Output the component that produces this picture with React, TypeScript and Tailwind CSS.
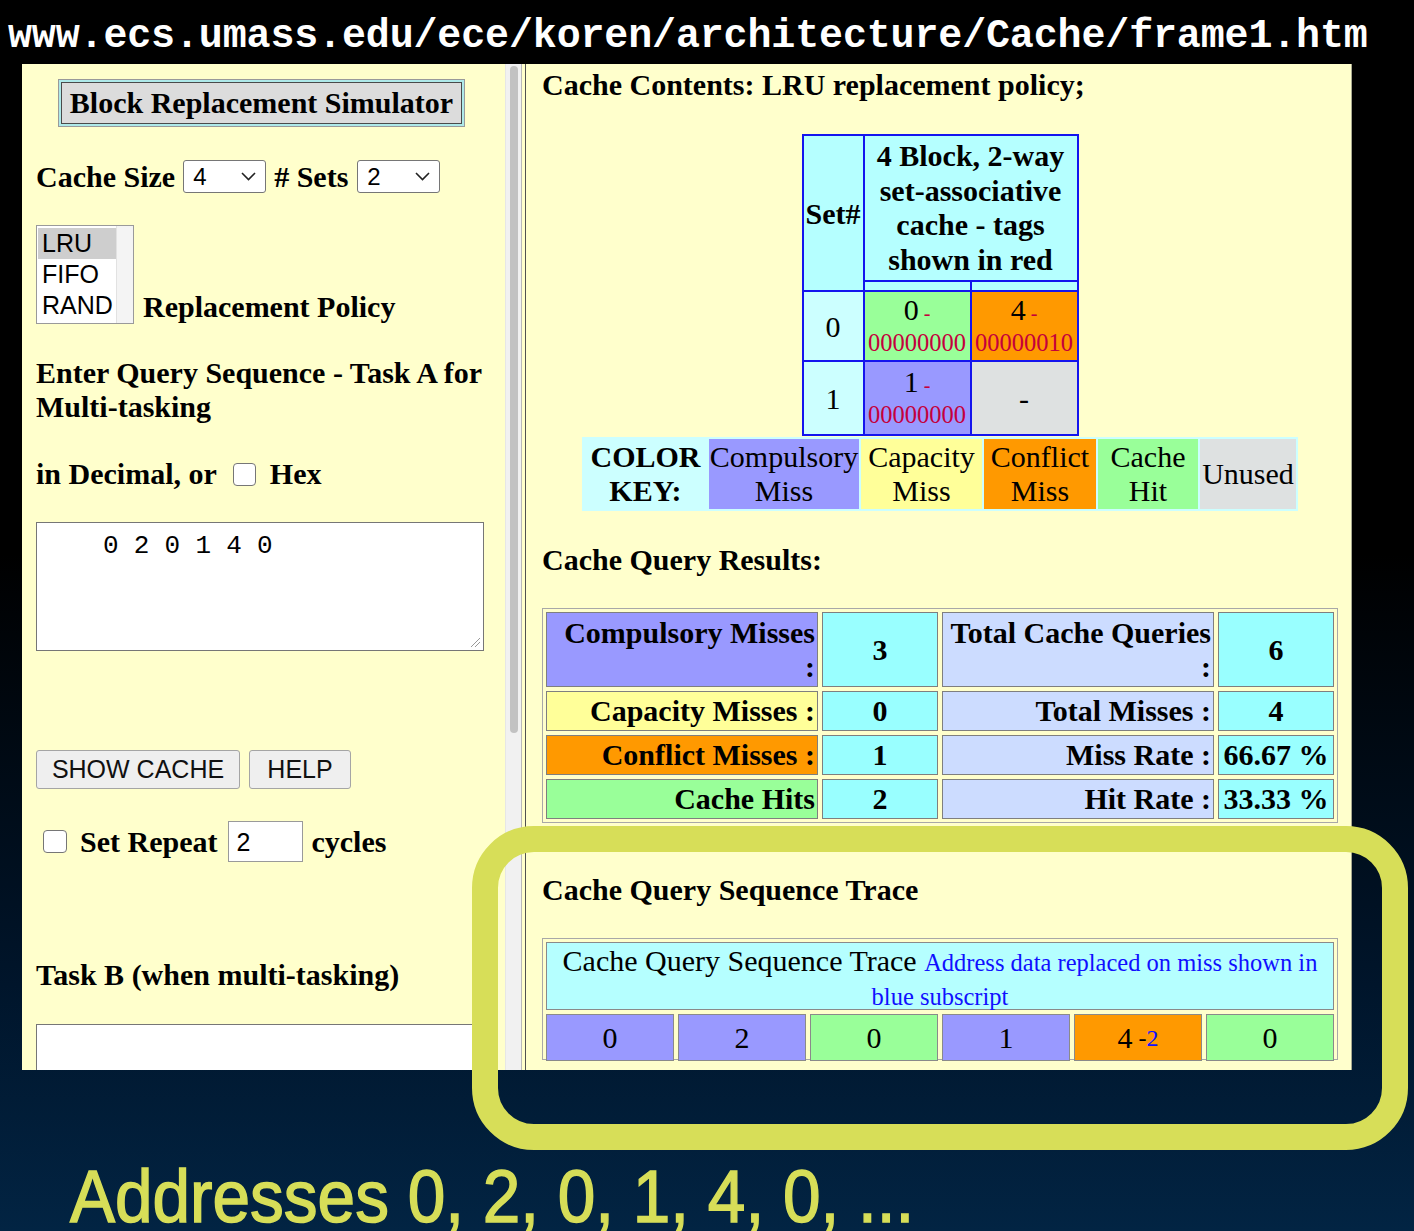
import React from "react";

const sans = "font-['Liberation_Sans',Arial,sans-serif]";

function Select({ value }: { value: string }) {
  return (
    <div
      className={`flex h-[33px] w-[83px] items-center justify-between rounded-[3px] border border-[#767676] bg-white pl-[9px] pr-[9px] text-[24px] font-normal ${sans}`}
    >
      <span>{value}</span>
      <svg width="15" height="9" viewBox="0 0 15 9" fill="none">
        <polyline points="1,1 7.5,7.5 14,1" stroke="#222" strokeWidth="1.6" />
      </svg>
    </div>
  );
}

function Checkbox({ w = 23 }: { w?: number }) {
  return (
    <div
      className={`h-[23px] shrink-0 rounded-[4px] border border-[#767676] bg-white ${
        w === 24 ? "w-[24px]" : "w-[23px]"
      }`}
    />
  );
}

function Label({ bg, children }: { bg: string; children: React.ReactNode }) {
  return (
    <div
      className={`flex flex-col items-end justify-center border border-[#7f7f7f] pr-[2px] text-right text-[30px] font-bold leading-[34px] ${bg}`}
    >
      {children}
    </div>
  );
}

function Value({ children }: { children: React.ReactNode }) {
  return (
    <div className="flex items-center justify-center border border-[#7f7f7f] bg-[#99ffff] text-[30px] font-bold leading-[34px]">
      {children}
    </div>
  );
}

function TraceCell({ bg, children }: { bg: string; children: React.ReactNode }) {
  return (
    <div className={`flex items-center justify-center border border-[#8a8a8a] text-[30px] ${bg}`}>
      {children}
    </div>
  );
}

export default function App() {
  return (
    <div className="relative h-[1231px] w-[1414px] overflow-hidden bg-[linear-gradient(to_bottom,#000_0%,#000_45%,#00152b_80%,#022443_100%)]">
      {/* url line */}
      <div className="h-[64px] whitespace-nowrap pl-[8px] pt-[15px] font-['Liberation_Mono',monospace] text-[40px] font-bold leading-[44px] tracking-[-0.15px] text-white">
        www.ecs.umass.edu/ece/koren/architecture/Cache/frame1.htm
      </div>

      {/* browser page */}
      <div className="ml-[22px] flex h-[1006px] w-[1330px] overflow-hidden font-['Liberation_Serif','Times_New_Roman',serif] text-black">
        {/* left frame */}
        <div className="w-[483px] shrink-0 overflow-hidden bg-[#ffffcc] pl-[14px] pt-[15px]">
          <div className="ml-[22px] h-[48px] w-[407px] border border-[#9a9a9a] bg-[#aee9e9] p-[2px]">
            <div className="flex h-full items-center justify-center border border-[#4a4a4a] bg-[#dcdcdc] text-[30px] font-bold leading-[34px]">
              Block Replacement Simulator
            </div>
          </div>

          <div className="mt-[33px] flex h-[33px] items-center text-[30px] font-bold leading-[34px]">
            <span>Cache Size</span>
            <div className="ml-[8px]">
              <Select value="4" />
            </div>
            <span className="ml-[8px]"># Sets</span>
            <div className="ml-[9px]">
              <Select value="2" />
            </div>
          </div>

          <div className="mt-[32px] flex items-end">
            <div className={`flex h-[99px] w-[98px] border border-[#9a9a9a] bg-white text-[25px] leading-[31px] ${sans}`}>
              <div className="w-[79px] pl-[1px] pt-[2px]">
                <div className="bg-[#cecece] pl-[4px]">LRU</div>
                <div className="pl-[4px]">FIFO</div>
                <div className="pl-[4px]">RAND</div>
              </div>
              <div className="flex-1 border-l border-[#e2e2e2] bg-[#f4f4f4]" />
            </div>
            <span className="ml-[9px] text-[30px] font-bold leading-[34px]">Replacement Policy</span>
          </div>

          <div className="mt-[32px] text-[30px] font-bold leading-[34px]">
            Enter Query Sequence - Task A for
            <br />
            Multi-tasking
          </div>

          <div className="mt-[33px] flex h-[34px] items-center text-[30px] font-bold leading-[34px]">
            <span>in Decimal, or</span>
            <div className="ml-[16px]">
              <Checkbox />
            </div>
            <span className="ml-[14px]">Hex</span>
          </div>

          <div className="relative mt-[31px] h-[129px] w-[448px] border border-[#767676] bg-white pl-[66px] pt-[8px] font-['Liberation_Mono',monospace] text-[26px] leading-[30px] tracking-[-0.2px] whitespace-pre">
            0 2 0 1 4 0
            <svg className="absolute bottom-[2px] right-[2px]" width="11" height="11" viewBox="0 0 11 11">
              <line x1="1" y1="10" x2="10" y2="1" stroke="#999" strokeWidth="1" />
              <line x1="5" y1="10" x2="10" y2="5" stroke="#999" strokeWidth="1" />
            </svg>
          </div>

          <div className={`mt-[99px] flex gap-[9px] text-[25px] text-[#111] ${sans}`}>
            <div className="flex h-[39px] w-[204px] items-center justify-center rounded-[3px] border border-[#a5a5a5] bg-[#efefef]">
              SHOW CACHE
            </div>
            <div className="flex h-[39px] w-[102px] items-center justify-center rounded-[3px] border border-[#a5a5a5] bg-[#efefef]">
              HELP
            </div>
          </div>

          <div className="mt-[32px] flex h-[41px] items-center text-[30px] font-bold leading-[34px]">
            <div className="ml-[7px]">
              <Checkbox w={24} />
            </div>
            <span className="ml-[13px]">Set Repeat</span>
            <div className={`ml-[11px] flex h-[41px] w-[75px] items-center border border-[#9a9a9a] bg-white pl-[7px] text-[25px] font-normal ${sans}`}>
              2
            </div>
            <span className="ml-[8px]">cycles</span>
          </div>

          <div className="mt-[96px] text-[30px] font-bold leading-[34px]">Task B (when multi-tasking)</div>

          <div className="mt-[32px] h-[100px] w-[448px] border border-[#767676] bg-white" />
        </div>

        {/* scrollbar */}
        <div className="w-[16px] shrink-0 border-l border-[#e6e6e6] bg-[#f1f1f1] pt-[2px]">
          <div className="mx-auto h-[667px] w-[8px] rounded-full bg-[#c2c2c2]" />
        </div>
        {/* frame divider */}
        <div className="w-[5px] shrink-0 border-l border-r border-l-[#b8b8b8] border-r-[#505050] bg-[#ffffcc]" />

        {/* right frame */}
        <div className="w-[826px] shrink-0 border-r border-[#a8a890] bg-[#ffffcc] pl-[16px] pr-[13px] pt-[4px]">
          <div className="text-[30px] font-bold leading-[34px]">Cache Contents: LRU replacement policy;</div>

          <div className="mx-auto mt-[32px] grid w-fit grid-cols-[59px_105px_105px] grid-rows-[144px_8px_68px_72px] gap-[2px] bg-[#1414ee] p-[2px] text-center">
            <div className="row-span-2 flex items-center justify-center bg-[#b5ffff] text-[30px] font-bold">Set#</div>
            <div className="col-span-2 flex items-center justify-center bg-[#b5ffff] text-[30px] font-bold leading-[34.5px]">
              <div>
                4 Block, 2-way
                <br />
                set-associative
                <br />
                cache - tags
                <br />
                shown in red
              </div>
            </div>
            <div className="bg-[#b5ffff]" />
            <div className="bg-[#b5ffff]" />

            <div className="flex items-center justify-center bg-[#ccffff] text-[30px]">0</div>
            <div className="flex flex-col items-center justify-center bg-[#99ff99] leading-[30px]">
              <div className="text-[30px]">
                0<span className="text-[20px] text-[#c4003c]"> -</span>
              </div>
              <div className="text-[24.5px] text-[#c4003c]">00000000</div>
            </div>
            <div className="flex flex-col items-center justify-center bg-[#ff9900] leading-[30px]">
              <div className="text-[30px]">
                4<span className="text-[20px] text-[#c4003c]"> -</span>
              </div>
              <div className="text-[24.5px] text-[#c4003c]">00000010</div>
            </div>

            <div className="flex items-center justify-center bg-[#ccffff] text-[30px]">1</div>
            <div className="flex flex-col items-center justify-center bg-[#9999ff] leading-[30px]">
              <div className="text-[30px]">
                1<span className="text-[20px] text-[#c4003c]"> -</span>
              </div>
              <div className="text-[24.5px] text-[#c4003c]">00000000</div>
            </div>
            <div className="flex items-center justify-center bg-[#dee1e1] text-[30px]">-</div>
          </div>

          <div className="mx-auto mt-[1px] flex w-fit gap-[2px] bg-[#ccffff] p-[2px] text-center text-[30px] leading-[34px]">
            <div className="flex h-[70px] w-[123px] items-center justify-center font-bold">
              <div>
                COLOR
                <br />
                KEY:
              </div>
            </div>
            <div className="flex h-[70px] w-[150px] items-center justify-center bg-[#9999ff]">
              <div>
                Compulsory
                <br />
                Miss
              </div>
            </div>
            <div className="flex h-[70px] w-[121px] items-center justify-center bg-[#ffff99]">
              <div>
                Capacity
                <br />
                Miss
              </div>
            </div>
            <div className="flex h-[70px] w-[112px] items-center justify-center bg-[#ff9900]">
              <div>
                Conflict
                <br />
                Miss
              </div>
            </div>
            <div className="flex h-[70px] w-[100px] items-center justify-center bg-[#99ff99]">
              <div>
                Cache
                <br />
                Hit
              </div>
            </div>
            <div className="flex h-[70px] w-[96px] items-center justify-center bg-[#dee1e1]">Unused</div>
          </div>

          <div className="mt-[32px] text-[30px] font-bold leading-[34px]">Cache Query Results:</div>

          <div className="mt-[31px] grid w-[796px] grid-cols-[272px_116px_272px_116px] grid-rows-[75px_40px_40px_40px] gap-[4px] border border-[#a8a8a8] p-[3px]">
            <Label bg="bg-[#9999ff]">
              <span>Compulsory Misses</span>
              <span>:</span>
            </Label>
            <Value>3</Value>
            <Label bg="bg-[#ccdcff]">
              <span>Total Cache Queries</span>
              <span>:</span>
            </Label>
            <Value>6</Value>

            <Label bg="bg-[#ffff99]">Capacity Misses :</Label>
            <Value>0</Value>
            <Label bg="bg-[#ccdcff]">Total Misses :</Label>
            <Value>4</Value>

            <Label bg="bg-[#ff9900]">Conflict Misses :</Label>
            <Value>1</Value>
            <Label bg="bg-[#ccdcff]">Miss Rate :</Label>
            <Value>66.67 %</Value>

            <Label bg="bg-[#99ff99]">Cache Hits</Label>
            <Value>2</Value>
            <Label bg="bg-[#ccdcff]">Hit Rate :</Label>
            <Value>33.33 %</Value>
          </div>

          <div className="mt-[50px] text-[30px] font-bold leading-[34px]">Cache Query Sequence Trace</div>

          <div className="mt-[31px] flex w-[796px] flex-col gap-[4px] border border-[#a8a8a8] p-[3px]">
            <div className="flex h-[68px] flex-col justify-center border border-[#8a8a8a] bg-[#b5ffff] pt-[4px] text-center leading-[31px]">
              <div>
                <span className="text-[30px]">Cache Query Sequence Trace </span>
                <span className="text-[24.5px] text-[#1010ff]">Address data replaced on miss shown in</span>
              </div>
              <div className="text-[24.5px] text-[#1010ff]">blue subscript</div>
            </div>
            <div className="grid h-[42px] grid-cols-6 gap-[4px]">
              <TraceCell bg="bg-[#9999ff]">0</TraceCell>
              <TraceCell bg="bg-[#9999ff]">2</TraceCell>
              <TraceCell bg="bg-[#99ff99]">0</TraceCell>
              <TraceCell bg="bg-[#9999ff]">1</TraceCell>
              <TraceCell bg="bg-[#ff9900]">
                4<span className="text-[24px]">&nbsp;-</span>
                <span className="text-[24px] text-[#1010ff]">2</span>
              </TraceCell>
              <TraceCell bg="bg-[#99ff99]">0</TraceCell>
            </div>
          </div>
        </div>
      </div>

      {/* caption */}
      <div className="mt-[91px] h-[70px] pl-[70px]">
        <div className="origin-left scale-x-[0.9] whitespace-nowrap font-['Liberation_Sans',Arial,sans-serif] text-[75px] leading-[70px] text-[#d7de58] [-webkit-text-stroke:1.5px_#d7de58]">
          Addresses 0, 2, 0, 1, 4, 0, ...
        </div>
      </div>

      {/* highlight ring drawn over the slide */}
      <div className="pointer-events-none absolute left-[472px] top-[826px] h-[324px] w-[936px] rounded-[62px] border-[26px] border-[#d7de58]" />
    </div>
  );
}
